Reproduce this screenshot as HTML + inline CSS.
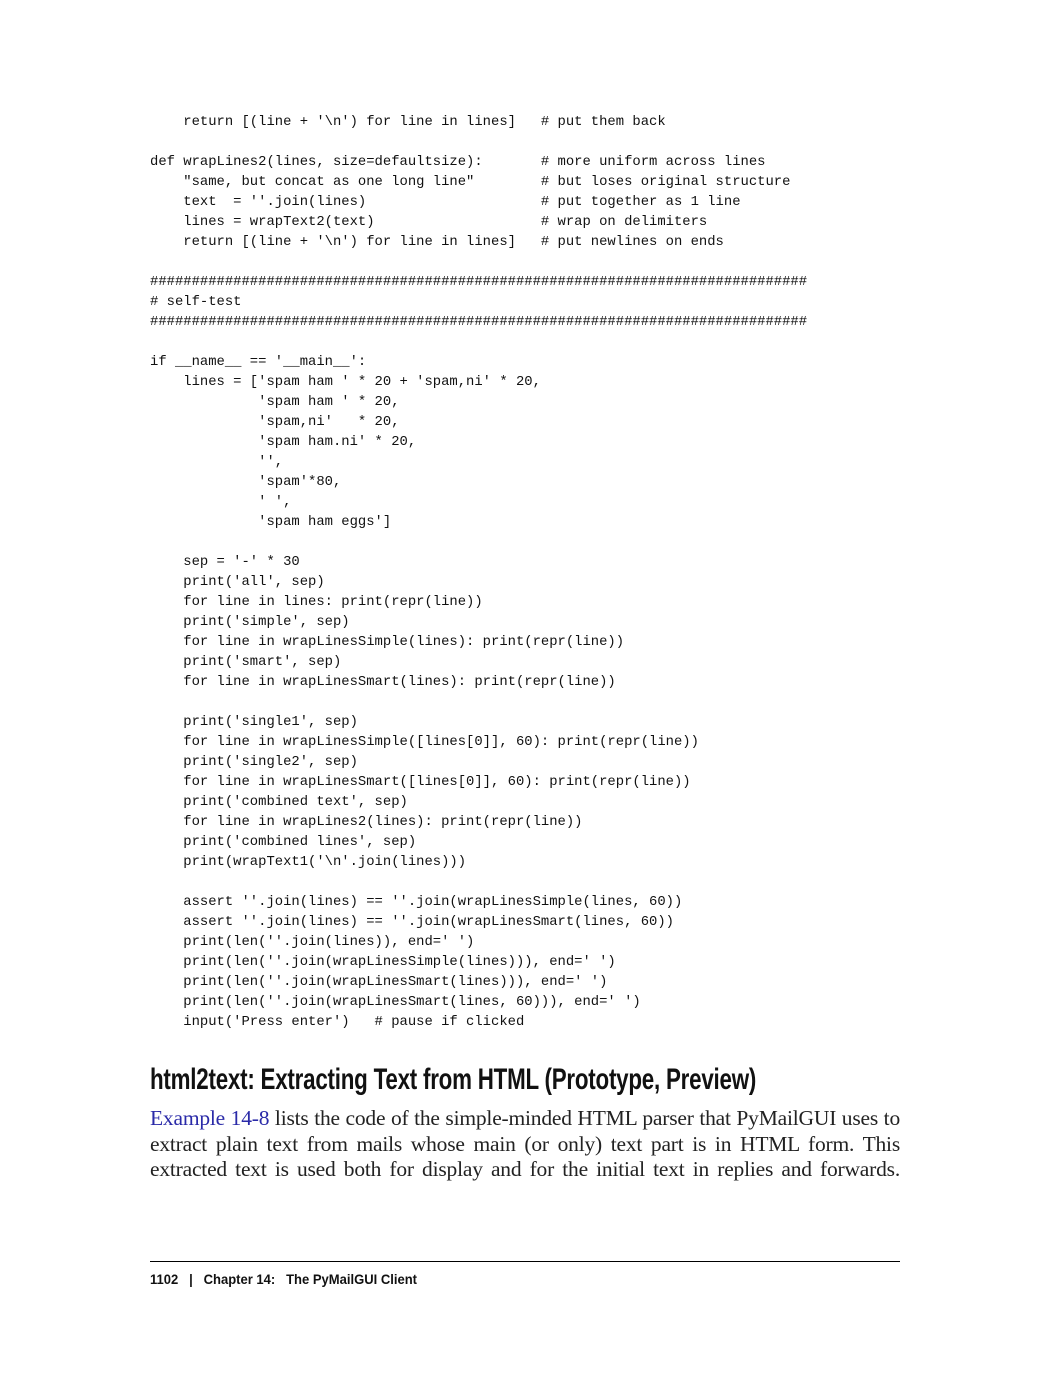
<!DOCTYPE html>
<html><head><meta charset="utf-8"><style>
body{margin:0;background:#fff;width:1050px;height:1378px;position:relative;overflow:hidden}
pre{position:absolute;left:150px;top:112px;margin:0;font-family:"Liberation Mono",monospace;font-size:13.87px;line-height:20px;color:#111}
h2{position:absolute;left:150px;top:1062px;margin:0;font-family:"Liberation Sans",sans-serif;font-weight:bold;font-size:30px;line-height:36px;white-space:nowrap;transform-origin:0 0;transform:scaleX(0.745);color:#111;letter-spacing:-0.3px}
p{position:absolute;left:150px;top:1106px;width:750px;margin:0;font-family:"Liberation Serif",serif;font-size:21.5px;line-height:25.5px;text-align:justify;text-align-last:justify;color:#222;letter-spacing:-0.2px}
p a{color:#2a2aa8;text-decoration:none}
.rule{position:absolute;left:150px;top:1261px;width:750px;height:1px;background:#000}
.foot{position:absolute;left:150px;top:1271px;font-family:"Liberation Sans",sans-serif;font-weight:bold;font-size:14px;color:#111;white-space:pre;transform-origin:0 0;transform:scaleX(0.93)}
</style></head><body>
<pre>    return [(line + '\n') for line in lines]   # put them back

def wrapLines2(lines, size=defaultsize):       # more uniform across lines
    "same, but concat as one long line"        # but loses original structure
    text  = ''.join(lines)                     # put together as 1 line
    lines = wrapText2(text)                    # wrap on delimiters
    return [(line + '\n') for line in lines]   # put newlines on ends

###############################################################################
# self-test
###############################################################################

if __name__ == '__main__':
    lines = ['spam ham ' * 20 + 'spam,ni' * 20,
             'spam ham ' * 20,
             'spam,ni'   * 20,
             'spam ham.ni' * 20,
             '',
             'spam'*80,
             ' ',
             'spam ham eggs']

    sep = '-' * 30
    print('all', sep)
    for line in lines: print(repr(line))
    print('simple', sep)
    for line in wrapLinesSimple(lines): print(repr(line))
    print('smart', sep)
    for line in wrapLinesSmart(lines): print(repr(line))

    print('single1', sep)
    for line in wrapLinesSimple([lines[0]], 60): print(repr(line))
    print('single2', sep)
    for line in wrapLinesSmart([lines[0]], 60): print(repr(line))
    print('combined text', sep)
    for line in wrapLines2(lines): print(repr(line))
    print('combined lines', sep)
    print(wrapText1('\n'.join(lines)))

    assert ''.join(lines) == ''.join(wrapLinesSimple(lines, 60))
    assert ''.join(lines) == ''.join(wrapLinesSmart(lines, 60))
    print(len(''.join(lines)), end=' ')
    print(len(''.join(wrapLinesSimple(lines))), end=' ')
    print(len(''.join(wrapLinesSmart(lines))), end=' ')
    print(len(''.join(wrapLinesSmart(lines, 60))), end=' ')
    input('Press enter')   # pause if clicked</pre>
<h2>html2text: Extracting Text from HTML (Prototype, Preview)</h2>
<p><a>Example 14-8</a> lists the code of the simple-minded HTML parser that PyMailGUI uses to extract plain text from mails whose main (or only) text part is in HTML form. This extracted text is used both for display and for the initial text in replies and forwards.</p>
<div class="rule"></div>
<div class="foot">1102   |   Chapter 14:   The PyMailGUI Client</div>
</body></html>
